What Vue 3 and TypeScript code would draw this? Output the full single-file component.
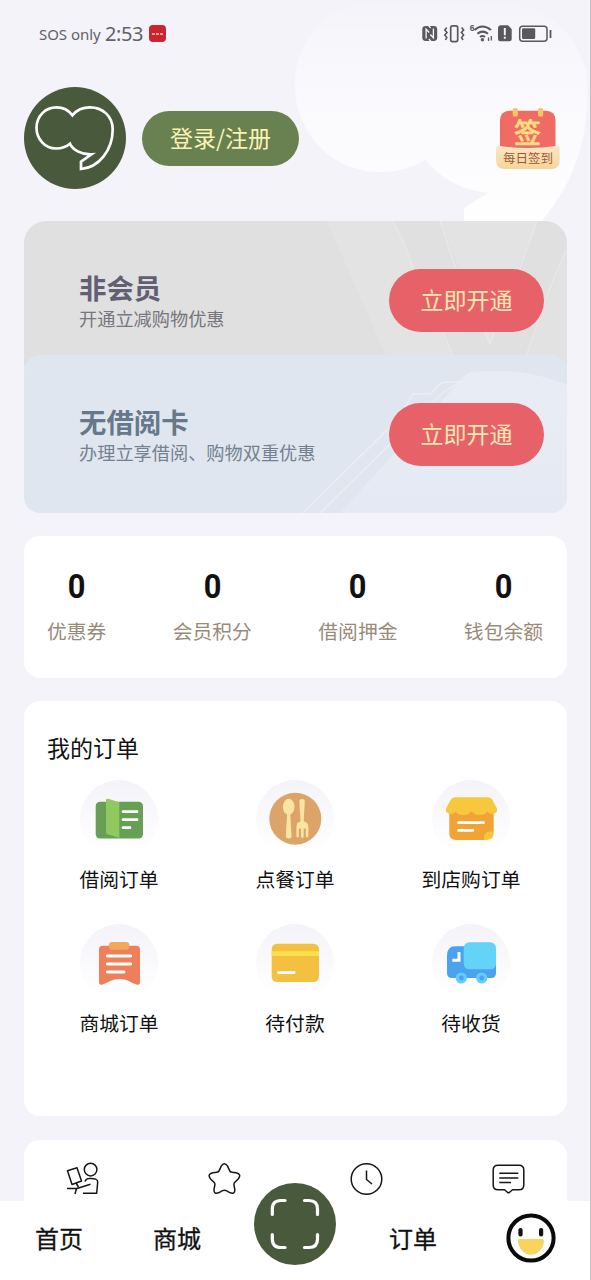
<script setup lang="ts">
interface Plan { key: string; title: string; note: string }
interface Stat { label: string; value: number }
interface Order { icon: string; label: string }

const plans: Plan[] = [
  { key: 'member', title: '非会员', note: '开通立减购物优惠' },
  { key: 'reader', title: '无借阅卡', note: '办理立享借阅、购物双重优惠' },
]
const stats: Stat[] = [
  { label: '优惠券', value: 0 },
  { label: '会员积分', value: 0 },
  { label: '借阅押金', value: 0 },
  { label: '钱包余额', value: 0 },
]
const orders: Order[] = [
  { icon: 'book', label: '借阅订单' },
  { icon: 'meal', label: '点餐订单' },
  { icon: 'shop', label: '到店购订单' },
  { icon: 'clipboard', label: '商城订单' },
  { icon: 'card', label: '待付款' },
  { icon: 'truck', label: '待收货' },
]
</script>

<template>
  <div class="screen">
    <svg class="backdrop" width="300" height="226" viewBox="290 0 300 226">
      <defs>
        <linearGradient id="glow" x1="0" y1="0" x2="0" y2="1">
          <stop offset="0" stop-color="#fff" stop-opacity="0" />
          <stop offset="0.3" stop-color="#fcfbff" stop-opacity="0.6" />
          <stop offset="1" stop-color="#fff" />
        </linearGradient>
      </defs>
      <path fill="url(#glow)" d="M425 160C412 168 397 172 380 172C332 172 295 133 295 85C295 35 333 0 378 0H500C555 5 588 45 588 92C588 146 569 192 537 226H464V208L488 193C462 190 441 179 425 160Z" />
    </svg>

    <main class="content">
      <div class="status">
        <span class="carrier">SOS only</span>
        <span class="time">2:53</span>
        <span class="app-badge"><i></i><i></i><i></i></span>
        <svg class="status-icons" width="132" height="24" viewBox="0 0 132 24">
          <g fill="none" stroke="#58585d">
            <rect x="29.7" y="3.8" width="7" height="15.8" rx="1.8" stroke-width="1.7" />
            <path d="M25.8 5.5L23.8 8L26 10.5L23.8 13L25.8 15.5L24.5 18M40.6 5.5L42.6 8L40.4 10.5L42.6 13L40.6 15.5L42 18" stroke-width="1.6" />
            <path d="M53.5 8Q61.3 1 70 8M56.4 11.8Q61.5 7.5 67 11.8M59 15Q61.5 13 64 15" stroke-width="2" />
            <path d="M67.5 15.5V19M70.3 14V18.5" stroke-width="1.3" />
            <rect x="98.7" y="4.2" width="27.3" height="15" rx="3" stroke-width="1.5" />
            <path d="M129.5 8V16" stroke-width="1.8" />
          </g>
          <g fill="#58585d">
            <rect x="1.3" y="4" width="14.9" height="15" rx="3.4" />
            <circle cx="61.4" cy="17.8" r="1.7" />
            <path d="M80 3.3H87L90.7 7V16.8Q90.7 19.3 88.2 19.3H79.5Q77 19.3 77 16.8V6.3Q77 3.3 80 3.3Z" />
            <rect x="101" y="6.2" width="13.2" height="10.8" rx="1.2" />
            <text x="48.8" y="9.2" font-size="8.5" font-weight="700">6</text>
          </g>
          <g fill="none" stroke="#f7f6fc">
            <path d="M5.1 16.5V7.2L8.2 10.5M12.4 6.5V15.8L9.3 12.5M7.6 3.5L9.6 6M9.9 19.5L7.9 17" stroke-width="1.3" />
            <path d="M83.8 6V13.3M83.8 14.7V16.7" stroke-width="1.9" />
          </g>
        </svg>
      </div>

      <header class="profile">
        <svg class="avatar" width="102" height="102" viewBox="0 0 102 102">
          <circle cx="51" cy="51" r="51" fill="#495a3c" />
          <path d="M48.3 28.3C44 22.5 38 20.4 32.5 20.4C21 20.4 12.5 29.5 12.5 40.7C12.5 52 21 61.5 32 61.5C37.5 61.5 42 60 46 56.7C48.5 62.5 57 67.8 67.5 67.3L57 74.7V82C75 80.5 88.7 63 88.7 42.5C88.7 29 78.5 20.4 66 20.4C59 20.4 52.5 23.3 48.3 28.3Z" fill="none" stroke="#fff" stroke-width="2.7" />
        </svg>
        <button class="login">登录/注册</button>
        <svg class="signin" width="64" height="63" viewBox="0 0 64 63">
          <defs>
            <linearGradient id="scroll" x1="0" y1="0" x2="0" y2="1">
              <stop offset="0" stop-color="#fbe7c6" /><stop offset="1" stop-color="#f6d698" />
            </linearGradient>
          </defs>
          <rect x="4" y="3.7" width="55.5" height="46" rx="9" fill="#ef6b63" />
          <rect x="16.7" y="1" width="5.2" height="8.8" rx="1.8" fill="#f8c465" />
          <rect x="42" y="1" width="5.2" height="8.8" rx="1.8" fill="#f8c465" />
          <text x="31.5" y="35.5" text-anchor="middle" font-size="27" font-weight="500" fill="#fddd83" stroke="#fddd83" stroke-width=".6">签</text>
          <path d="M0 41Q0 38.7 2 38.7Q31.8 43.5 61.7 38.7Q63.7 38.7 63.7 41V53Q63.7 62 55 62H9Q0 62 0 53Z" fill="url(#scroll)" />
          <text x="31.9" y="56" text-anchor="middle" font-size="12.5" fill="#9f5738">每日签到</text>
        </svg>
      </header>

      <section v-for="plan in plans" :key="plan.key" class="plan" :class="plan.key">
        <svg v-if="plan.key === 'member'" class="plan-art" width="543" height="158" viewBox="0 0 543 158">
          <path d="M303 0H369L438 158H372Z" fill="#fff" opacity=".12" />
          <path d="M416 0H513L466 123Z" fill="#fff" opacity=".1" />
          <path d="M543 0V158H494L543 28Z" fill="#fff" opacity=".08" />
          <path d="M369 0Q382 25 389 46L430 136M416 0L431 45L466 123L497 45L513 0M543 28Q523 70 502 136" fill="none" stroke="#fff" stroke-opacity=".24" stroke-width="1.5" />
        </svg>
        <svg v-else class="plan-art" width="543" height="158" viewBox="0 0 543 158">
          <defs>
            <linearGradient id="hill" x1="0" y1="0" x2="0" y2="1">
              <stop offset="0" stop-color="#e8edf5" /><stop offset="1" stop-color="#e4e9f3" />
            </linearGradient>
          </defs>
          <path d="M316 158L436 26Q442 17 450 17Q500 12 543 30V158Z" fill="url(#hill)" />
          <path d="M279 158L373 65L389 39H407Q414 28 421 27H438M296 158L408 48L421 36L438 26" fill="none" stroke="#f1f5fa" stroke-opacity=".55" stroke-width="1.4" />
        </svg>
        <div class="plan-text">
          <h2>{{ plan.title }}</h2>
          <p>{{ plan.note }}</p>
        </div>
        <button class="open">立即开通</button>
      </section>

      <section class="panel stats">
        <div v-for="s in stats" :key="s.label" class="stat">
          <strong>{{ s.value }}</strong>
          <span>{{ s.label }}</span>
        </div>
      </section>

      <section class="panel orders">
        <h3>我的订单</h3>
        <div class="order-grid">
          <div v-for="o in orders" :key="o.icon" class="order">
            <svg class="disc" width="78" height="78" viewBox="0 0 78 78">
              <g v-if="o.icon === 'book'">
                <rect x="15.7" y="21.7" width="47.3" height="36.7" rx="4.2" fill="#67a055" />
                <path d="M26 20Q26 18.3 28 18.8L39.3 22.3V57.7L28 54.6Q26 54 26 52Z" fill="#8fc95f" />
                <path d="M43 31.7H57M43 39.7H57M43 47.7H50" stroke="#fff" stroke-width="2.8" stroke-linecap="round" />
              </g>
              <g v-else-if="o.icon === 'meal'">
                <circle cx="39.3" cy="38.7" r="26" fill="#dca469" />
                <g fill="#fbe3a1">
                  <ellipse cx="32.7" cy="26.8" rx="5.8" ry="8" />
                  <path d="M31.2 33H34.2L35.6 56Q35.6 58.5 32.7 58.5Q29.8 58.5 29.8 56Z" />
                  <path d="M43.3 21.5Q43.3 19 46 19Q48.8 19 48.8 21.5L47.6 43H44.6Z" />
                  <path d="M40.4 48Q40.4 41.5 44.6 41.5H47.8Q52.4 41.5 52.4 48V56.5Q51.1 58.5 49.8 56.5V48.5H47.7V56.5Q46.3 59.5 45 56.5V48.5H42.9V56.5Q41.6 58.5 40.4 56.5Z" />
                </g>
              </g>
              <g v-else-if="o.icon === 'shop'">
                <path d="M17.3 29H61.7V52L54 60H24Q17.3 60 17.3 53.5Z" fill="#f2a336" />
                <path d="M52 60V58Q52 51.5 58 51.5H61.7V53Q61.7 60 54.5 60Z" fill="#f8c43c" />
                <path d="M23 17.3H56Q59 17.3 60.5 20L65 28.5Q66 33.2 60.5 34Q57 34.2 55.5 31.5Q53 35 47.6 35Q42.5 35 39.5 31.3Q36.5 35 31.4 35Q26 35 23.5 31.5Q22 34.2 18.5 34Q13 33.2 14 28.5L18.5 20Q20 17.3 23 17.3Z" fill="#f7c83e" />
                <path d="M26.5 42.7H51.5M26.5 50.4H40.8" stroke="#fff" stroke-width="2.8" stroke-linecap="round" />
              </g>
              <g v-else-if="o.icon === 'clipboard'">
                <path d="M22.5 21.7H56.5Q60 21.7 60 25.2V58Q60 61.5 56.5 60.5C51 58.7 47 55 39.5 55S28 58.7 22.5 60.5Q19 61.5 19 58V25.2Q19 21.7 22.5 21.7Z" fill="#ed805a" />
                <rect x="29" y="18" width="20.3" height="7.7" rx="3.2" fill="#f1a95d" />
                <path d="M27.3 32H50.7M27.3 40H50.7M27.3 48H44" stroke="#fff" stroke-width="2.9" stroke-linecap="round" />
              </g>
              <g v-else-if="o.icon === 'card'">
                <rect x="15.7" y="19.7" width="47.3" height="38.3" rx="5.5" fill="#f3c03f" />
                <rect x="15.7" y="27.2" width="47.3" height="4.8" fill="#fbe04c" />
                <path d="M22.5 48.6H38.2" stroke="#fff" stroke-width="2.7" stroke-linecap="round" />
              </g>
              <g v-else>
                <path d="M23 22.3H42V40H64V49Q64 54 59 54H20Q15 54 15 49V32Q15 22.3 23 22.3Z" fill="#4ba2ef" />
                <rect x="31.7" y="18.3" width="32.3" height="27" rx="5.5" fill="#63d3f7" />
                <path d="M27 28V36.3H20.3" fill="none" stroke="#fff" stroke-width="3" />
                <g fill="#4ba2ef" stroke="#63cdf6" stroke-width="3.2">
                  <circle cx="29.3" cy="54" r="4" /><circle cx="49.7" cy="54" r="4" />
                </g>
              </g>
            </svg>
            <span>{{ o.label }}</span>
          </div>
        </div>
      </section>

      <section class="panel tools">
        <svg width="33" height="34" viewBox="0 0 33 34">
          <g fill="none" stroke="#161616" stroke-width="1.5" stroke-linejoin="round">
            <circle cx="24.6" cy="7.6" r="6.3" />
            <path d="M1.5 8.8L11 5.8L15.5 19L6 22.5ZM10 21L12.5 25M1 26.5H10.5L9 32M11 26.5L24.5 22.3M19 19.5Q20 16.5 23 16.5Q32 16 31.7 20L30.7 31.2H17" />
          </g>
        </svg>
        <svg width="33" height="34" viewBox="0 0 33 34">
          <path d="M13.2 4.2Q16.4 -0.8 19.6 4.2L21.6 8.6Q22.2 10 24 10.2L28 10.7Q34 12 30.2 17L26.8 20.3Q25.6 21.5 26 23.1L26.8 27.5Q27 32.5 22.2 30.8L18.2 28.7Q16.4 27.8 14.6 28.7L10.6 30.8Q5.8 32.5 6 27.5L6.8 23.1Q7.2 21.5 6 20.3L2.6 17Q-1.2 12 4.8 10.7L8.8 10.2Q10.6 10 11.2 8.6Z" fill="none" stroke="#161616" stroke-width="1.5" />
        </svg>
        <svg width="33" height="34" viewBox="0 0 33 34">
          <g fill="none" stroke="#161616" stroke-width="1.5">
            <circle cx="16.5" cy="17" r="15.3" />
            <path d="M16.5 8.5V17.5L22 22" />
          </g>
        </svg>
        <svg width="33" height="34" viewBox="0 0 33 34">
          <g fill="none" stroke="#161616" stroke-width="1.5" stroke-linejoin="round">
            <path d="M6 3.2H27Q31.8 3.2 31.8 8V23Q31.8 27.8 27 27.8H20.5L17.3 30.5Q16.5 31 15.7 30.5L12.5 27.8H6Q1.2 27.8 1.2 23V8Q1.2 3.2 6 3.2Z" />
            <path d="M7.3 11.2H26.3M7.3 16H26.3M7.3 20.6H19" />
          </g>
        </svg>
      </section>
    </main>

    <nav class="tabs">
      <span>首页</span>
      <span>商城</span>
      <span class="scan">
        <svg width="82" height="82" viewBox="0 0 82 82">
          <circle cx="41" cy="41" r="41" fill="#495a3c" />
          <path d="M18.3 31.5V26Q18.3 17.5 26.8 17.5H31M50.5 17.5H55Q63.5 17.5 63.5 26V31.5M63.5 51.5V56Q63.5 64.5 55 64.5H50.5M31 64.5H26.8Q18.3 64.5 18.3 56V51.5" fill="none" stroke="#fff" stroke-width="3.2" stroke-linecap="round" />
        </svg>
      </span>
      <span>订单</span>
      <span>
        <svg class="face" width="50" height="50" viewBox="0 0 50 50">
          <circle cx="25" cy="25" r="22.6" fill="#fff" stroke="#090a0a" stroke-width="4" />
          <rect x="12.4" y="15" width="4.2" height="8.5" rx="2.1" fill="#111" />
          <rect x="33" y="15" width="4.2" height="8.5" rx="2.1" fill="#111" />
          <path d="M13.5 26H36.5Q38.3 26 38.1 28C37 37 31 41.8 25 41.8S13 37 11.9 28Q11.7 26 13.5 26Z" fill="#f6d45d" />
        </svg>
      </span>
    </nav>
  </div>
</template>

<style>
body { margin: 0; background: #f3f3f9; }
</style>

<style scoped>
.screen {
  position: relative;
  display: flex;
  flex-direction: column;
  box-sizing: border-box;
  width: 591px;
  height: 1280px;
  overflow: hidden;
  border-right: 1px solid #c1c1c5;
  background: #f3f3f9;
  color: #111;
  font-family: "Noto Sans CJK SC", sans-serif;
  white-space: nowrap;
}
.backdrop { position: absolute; left: 290px; top: 0; }
svg { display: block; flex: none; }
h2, h3, p { margin: 0; }
button { padding: 0 0 2px; border: 0; font: inherit; }
.content {
  position: relative;
  flex: 1;
  min-height: 0;
  overflow: hidden;
  padding: 0 23px 0 24px;
}
.status {
  display: flex;
  align-items: center;
  height: 67px;
  padding: 0 14px 0 15px;
  color: #626267;
}
.carrier { width: 66px; font: 15px/20px "Noto Sans", sans-serif; letter-spacing: -.05px; }
.time { width: 44px; font: 20px/24px "Noto Sans", sans-serif; letter-spacing: -.45px; }
.app-badge {
  display: flex;
  align-items: center;
  justify-content: center;
  gap: 1px;
  width: 17px;
  height: 17px;
  border-radius: 4px;
  background: #c9252d;
}
.app-badge i { width: 3px; height: 2px; background: #ef9ca0; }
.status-icons { margin-left: auto; font-family: "Liberation Sans", sans-serif; }
.profile {
  display: flex;
  align-items: center;
  height: 102px;
  margin-top: 20px;
  padding-right: 7px;
}
.login {
  width: 157px;
  height: 55px;
  margin-left: 16px;
  border-radius: 28px;
  background: #698150;
  color: #fbf2b4;
  font-size: 23px;
}
.signin { margin-left: auto; }
.plan {
  position: relative;
  display: flex;
  align-items: center;
  justify-content: space-between;
  box-sizing: border-box;
  height: 158px;
  padding: 0 23px 0 55px;
  overflow: hidden;
}
.member { margin-top: 32px; border-radius: 22px 22px 16px 16px; background: #e0e0e0; color: #625f72; }
.reader { margin-top: -24px; border-radius: 16px; background: #e0e6ef; color: #67788a; }
.plan-art { position: absolute; left: 0; top: 0; }
.plan-text { position: relative; padding-top: 1px; }
.plan h2 { font-size: 27.4px; line-height: 36px; font-weight: 700; }
.plan p { font-size: 18.2px; line-height: 27px; color: #77757e; }
.reader p { color: #748190; }
.open {
  position: relative;
  width: 155px;
  height: 63px;
  border-radius: 32px;
  background: #e76169;
  color: #fbe7b4;
  font-size: 23px;
}
.panel { margin-top: 23px; border-radius: 16px; background: #fff; box-sizing: border-box; }
.stats {
  display: flex;
  justify-content: space-between;
  height: 142px;
  padding: 33px 24px 0 23px;
}
.stat { display: flex; flex-direction: column; align-items: center; }
.stat strong { font: 700 33.5px/36px Roboto, sans-serif; transform: scaleX(.92); }
.stat span { margin-top: 11px; font-size: 19.8px; line-height: 30px; color: #9a8a78; }
.orders { height: 415px; padding: 29px 7px 0; }
.orders h3 { padding-left: 16px; font-size: 23px; line-height: 34px; font-weight: 400; }
.order-grid { display: grid; grid-template-columns: repeat(3, 176px); grid-auto-rows: 144px; margin-top: 16px; }
.order { display: flex; flex-direction: column; align-items: center; }
.disc { border-radius: 50%; background: linear-gradient(#f4f3f9, #fff 92%); }
.order span { margin-top: 6px; font-size: 19.8px; line-height: 30px; }
.tools {
  display: flex;
  justify-content: space-between;
  height: 120px;
  margin-top: 24px;
  padding: 22px 42px 0;
}
.tabs {
  position: relative;
  display: grid;
  grid-template-columns: repeat(5, 118px);
  align-items: center;
  justify-items: center;
  box-sizing: border-box;
  height: 79px;
  padding-bottom: 6px;
  background: #fff;
  font-size: 24px;
  line-height: 34px;
  -webkit-text-stroke: .3px #111;
}
.scan { margin: -31px 0 -4px; }
</style>
